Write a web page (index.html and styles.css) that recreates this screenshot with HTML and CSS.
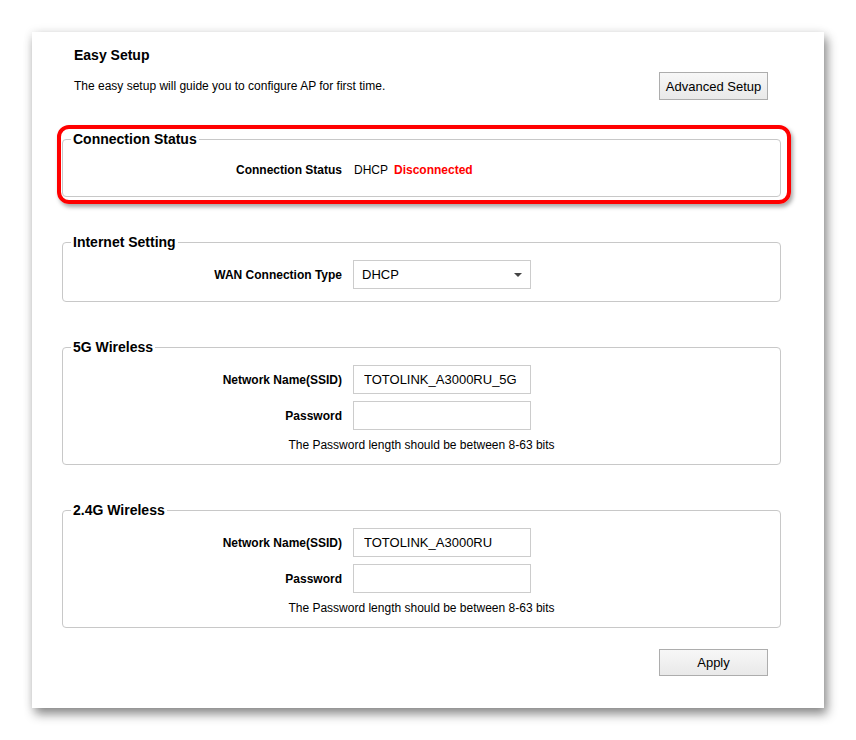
FILE: index.html
```html
<!DOCTYPE html>
<html>
<head>
<meta charset="utf-8">
<link rel="stylesheet" href="styles.css">
</head>
<body>
<div class="panel">
  <div class="header">
    <h1 class="title">Easy Setup</h1>
    <div class="intro">
      <p class="desc">The easy setup will guide you to configure AP for first time.</p>
      <button class="btn btn-adv">Advanced Setup</button>
    </div>
  </div>

  <div class="status-wrap">
    <fieldset class="group group-status">
      <legend>Connection Status</legend>
      <div class="row">
        <span class="label">Connection Status</span>
        <span class="value">DHCP</span>
        <span class="state">Disconnected</span>
      </div>
    </fieldset>
    <div class="highlight"></div>
  </div>

  <fieldset class="group">
    <legend>Internet Setting</legend>
    <div class="row">
      <label class="label">WAN Connection Type</label>
      <div class="select-wrap">
        <select class="field select"><option>DHCP</option></select>
        <span class="caret"></span>
      </div>
    </div>
  </fieldset>

  <fieldset class="group">
    <legend>5G Wireless</legend>
    <div class="row">
      <label class="label">Network Name(SSID)</label>
      <input class="field" type="text" value="TOTOLINK_A3000RU_5G">
    </div>
    <div class="row">
      <label class="label">Password</label>
      <input class="field" type="text" value="">
    </div>
    <p class="hint">The Password length should be between 8-63 bits</p>
  </fieldset>

  <fieldset class="group">
    <legend>2.4G Wireless</legend>
    <div class="row">
      <label class="label">Network Name(SSID)</label>
      <input class="field" type="text" value="TOTOLINK_A3000RU">
    </div>
    <div class="row">
      <label class="label">Password</label>
      <input class="field" type="text" value="">
    </div>
    <p class="hint">The Password length should be between 8-63 bits</p>
  </fieldset>

  <div class="actions">
    <button class="btn btn-apply">Apply</button>
  </div>
</div>
</body>
</html>
```

FILE: styles.css
```css
* { box-sizing: border-box; }

html, body {
  margin: 0;
  padding: 0;
  background: #ffffff;
  font-family: "Liberation Sans", Arial, sans-serif;
  color: #000;
}

body {
  padding-bottom: 32px;
}

.panel {
  margin: 32px 0 0 32px;
  width: 792px;
  height: 676px;
  background: #fff;
  padding: 15px 43px 0 30px;
  box-shadow: 3px 6px 10px rgba(0, 0, 0, 0.45), 0 0 10px rgba(0, 0, 0, 0.08);
}

.header {
  padding-left: 12px;
}

.title {
  margin: 0;
  font-size: 14px;
  line-height: 16px;
  font-weight: bold;
}

.intro {
  margin-top: 9px;
  display: flex;
  align-items: center;
  justify-content: space-between;
  padding-right: 13px;
}

.desc {
  margin: 0;
  font-size: 12px;
  line-height: 14px;
}

.btn {
  font-family: "Liberation Sans", Arial, sans-serif;
  font-size: 13px;
  color: #000;
  width: 109px;
  border: 1px solid #adadad;
  background: linear-gradient(#f7f7f7, #e9e9e9);
  padding: 0;
  border-radius: 0;
}

.btn-adv { height: 28px; }
.btn-apply { height: 27px; }

.status-wrap {
  position: relative;
  margin-top: 31px;
}

.group {
  margin: 37px 0 0 0;
  padding: 10px 0 12px 0;
  border: 1px solid #c8c8c8;
  border-radius: 4px;
  min-width: 0;
}

.status-wrap .group { margin-top: 0; padding-top: 8px; }

legend {
  margin-left: 8px;
  padding: 0 2px;
  font-size: 14px;
  line-height: 16px;
  font-weight: bold;
}

.row {
  display: flex;
  align-items: center;
  height: 29px;
  gap: 11px;
}

.row + .row { margin-top: 7px; }

.label {
  width: 279px;
  text-align: right;
  font-size: 12px;
  font-weight: bold;
}

.value {
  font-size: 12px;
  margin-left: 1px;
}

.state {
  font-size: 12px;
  font-weight: bold;
  color: #ff0000;
  margin-left: -5px;
}

.field {
  width: 178px;
  height: 29px;
  border: 1px solid #cccccc;
  border-radius: 0;
  padding: 0 10px;
  font-family: "Liberation Sans", Arial, sans-serif;
  font-size: 13px;
  color: #000;
  background: #fff;
  outline: none;
}

.select-wrap {
  position: relative;
  width: 178px;
  height: 29px;
}

.select {
  appearance: none;
  -webkit-appearance: none;
  padding: 0 8px;
}

.caret {
  position: absolute;
  right: 9px;
  top: 13px;
  width: 0;
  height: 0;
  border-left: 4px solid transparent;
  border-right: 4px solid transparent;
  border-top: 4px solid #444;
}

.hint {
  margin: 8px 0 0 0;
  text-align: center;
  font-size: 12px;
  line-height: 14px;
}

.highlight {
  position: absolute;
  left: -5px;
  top: -6px;
  width: 734px;
  height: 79px;
  border: 4px solid #ff0000;
  border-radius: 12px;
  box-shadow: 2px 3px 4px rgba(0, 0, 0, 0.35);
  pointer-events: none;
}

.actions {
  margin-top: 21px;
  display: flex;
  justify-content: flex-end;
  padding-right: 13px;
}
```
